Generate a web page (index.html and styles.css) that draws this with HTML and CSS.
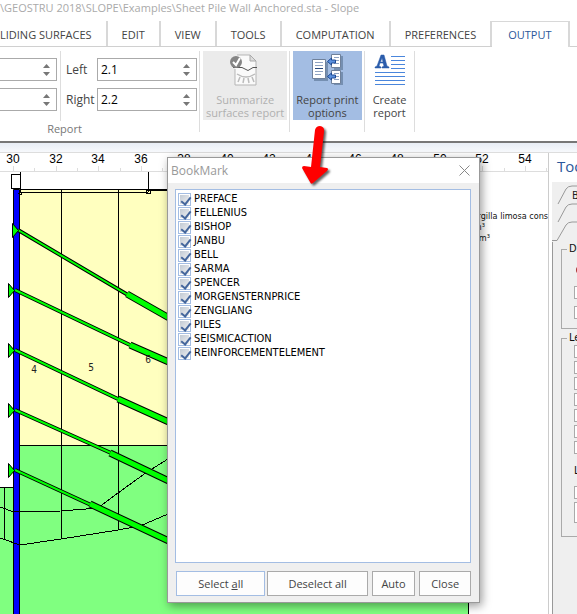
FILE: index.html
```html
<!DOCTYPE html>
<html lang="en">
<head>
<meta charset="utf-8">
<title>Slope</title>
<link rel="stylesheet" href="styles.css">
</head>
<body>
<header class="title">\GEOSTRU 2018\SLOPE\Examples\Sheet Pile Wall Anchored.sta - Slope</header>
<nav class="tabs">
  <a class="tab first" href="#">LIDING SURFACES</a>
  <a class="tab" href="#">EDIT</a>
  <a class="tab" href="#">VIEW</a>
  <a class="tab" href="#">TOOLS</a>
  <a class="tab" href="#">COMPUTATION</a>
  <a class="tab" href="#">PREFERENCES</a>
  <a class="tab active" href="#">OUTPUT</a>
</nav>
<section class="ribbon">
  <div class="group">
    <div class="fields">
      <div class="spins cut">
        <div class="spin"><input type="text" aria-label="Top margin"><svg width="7" height="12"><path d="M0 4 3.500 0 7 4zM0 8 3.500 12 7 8z"/></svg></div>
        <div class="spin"><input type="text" aria-label="Bottom margin"><svg width="7" height="12"><path d="M0 4 3.500 0 7 4zM0 8 3.500 12 7 8z"/></svg></div>
      </div>
      <div class="spins named">
        <label for="left">Left</label>
        <div class="spin"><input id="left" type="text" value="2.1"><svg width="7" height="12"><path d="M0 4 3.500 0 7 4zM0 8 3.500 12 7 8z"/></svg></div>
        <label for="right">Right</label>
        <div class="spin"><input id="right" type="text" value="2.2"><svg width="7" height="12"><path d="M0 4 3.500 0 7 4zM0 8 3.500 12 7 8z"/></svg></div>
      </div>
    </div>
    <div class="caption">Report</div>
  </div>
  <div class="cell">
    <button class="big disabled" disabled>
      <svg width="32" height="32" viewBox="0 0 32 32">
        <path d="M8 1h13l6 6v24H6V15" fill="#fafafa" stroke="#b5b5b5"/>
        <path d="M21 1v6h6z" fill="#ddd" stroke="#aaa"/>
        <path d="M4 13.500h9l6 3 5-3h4" fill="none" stroke="#555"/>
        <path d="M8 20q9 6 18 0M11 23l-2 5M15 24l-1 5M19 24l1 5M23 23l2 5" fill="none" stroke="#bbb" stroke-width="1.500"/>
        <circle cx="7" cy="8" r="6" fill="#858585"/>
        <path d="M4 8l3 3 4-7" fill="none" stroke="#fff" stroke-width="2"/>
      </svg>
      <span>Summarize<br>surfaces report</span>
    </button>
  </div>
  <div class="cell">
    <button class="big chosen">
      <svg width="32" height="32" viewBox="0 0 32 32">
        <path d="M3 8h14v19H3zM23 2h9v14H23zM23 18h9v13H23z" fill="#56708f" opacity=".6"/>
        <path d="M1.500 5.500h13v19h-13zM20.500.500h9v13h-9zM20.500 16.500h9v13h-9z" fill="#fff" stroke="#6f819b"/>
        <path d="M4 8.500h8M4 11.500h8M4 17.500h8M4 20.500h6M23 3.500h5M23 6.500h5M23 9.500h5M23 19.500h5M23 22.500h5M23 25.500h5" stroke="#8fa3c2" fill="none"/>
        <path d="M4 14.500h8" stroke="#28487c"/>
        <path d="M16.500 7.500l4-3.500v2h4v3h-4v2zM16.500 22.500l4-3.500v2h4v3h-4v2z" fill="#5a90de" stroke="#1e4a94"/>
      </svg>
      <span>Report print<br>options</span>
    </button>
  </div>
  <div class="cell">
    <button class="big">
      <svg width="32" height="32" viewBox="0 0 32 32">
        <path d="M17 2.500h14M17 6.500h14M17 10.500h14M17 14.500h14M1 18.500h30M1 22.500h30M1 26.500h30M1 30.500h30" stroke="#4a86dc" fill="none"/>
        <path d="M1 14v-1l2-1L7 1h3l3 11 2 1v1H8v-1l2-1-1-3H6l-1 3 2 1v1zM6.500 8h2.500L8 4z" fill="#2b5cab" stroke="#2b5cab" stroke-width=".5" fill-rule="evenodd"/>
      </svg>
      <span>Create<br>report</span>
    </button>
  </div>
</section>
<div class="strip"></div>
<main class="work">
  <div class="canvas">
    <svg class="drawing" width="548" height="461" viewBox="0 153 548 461">
      <g class="ruler">
        <path class="axis" d="M0 171.500h548M13.500 166v5M34.500 168v3M56.500 166v5M77.500 168v3M98.500 166v5M120.500 168v3M141.500 166v5M162.500 168v3M482.500 166v5M504.500 168v3M525.500 166v5M546.500 168v3"/>
        <text x="13" y="163">30</text><text x="56" y="163">32</text><text x="98" y="163">34</text><text x="141" y="163">36</text>
        <text x="184" y="163">38</text><text x="227" y="163">40</text><text x="269" y="163">42</text><text x="312" y="163">44</text>
        <text x="355" y="163">46</text><text x="397" y="163">48</text><text x="440" y="163">50</text><text x="482" y="163">52</text><text x="525" y="163">54</text>
      </g>
      <path fill="#ffffbf" d="M20 189h448v256H20z"/>
      <path fill="#80ff80" d="M20 445h448v169H0V487h20z"/>
      <path class="ink" d="M20 189.500h148M20 192.500h128M148.500 172v20M20.500 172v20M20 445.500h148M468.500 445v169M0 487.500h14M4.500 488v52M61.500 189v350M118.500 189v341"/>
      <path class="ink" d="M149 190h20" stroke-width="2"/>
      <rect class="ink" x="146.500" y="190.500" width="4" height="3"/>
      <path fill="#00f" stroke="#000" d="M13.500 189.500h6v430h-6z"/>
      <rect x="11.500" y="174.500" width="9" height="14" fill="#fff" stroke="#000"/>
      <circle class="ink" cx="20.500" cy="193.500" r="1.500"/>
      <path class="ink" d="M0 507l14 5 47-1 37-3 20-15 29-21 21-13M0 538l20 7 41-6 57-9 22-4 28-12"/>
      <path class="edge" d="M18 230l110 65M15 290l115 55M15 350l103 49M15 410l96 43M15 470l76 35"/>
      <path class="rod" d="M18 230l110 65M15 290l115 55M15 350l103 49M15 410l96 43M15 470l76 35"/>
      <path class="edge wide" d="M127 294l44 25M130 345l41 18M118 399l53 24M110 453l61 29M90 504l81 38"/>
      <path class="rod wide" d="M127 294l44 25M130 345l41 18M118 399l53 24M110 453l61 29M90 504l81 38"/>
      <path fill="#0f0" stroke="#000" d="M12.500 223.500v14l6-7zM8.500 283.500v14l6-7zM8.500 343.500v14l6-7zM8.500 403.500v14l6-7zM8.500 463.500v14l6-7z"/>
      <g class="slices"><text x="34" y="373">4</text><text x="91" y="371">5</text><text x="148" y="363">6</text></g>
      <g class="soil"><text x="548" y="219">argilla limosa cons</text><text x="485" y="230">m³</text><text x="490" y="241">m³</text></g>
    </svg>
  </div>
  <aside class="side">
    <h2>Too</h2>
    <svg class="sidetabs" width="40" height="60" viewBox="0 0 40 60">
      <path d="M6 22L14 7q2-3 6-3h20M6 40l8-15q2-3 6-3h20M0 58.500h5L14 43q2-3 6-3h20" fill="none" stroke="#999"/>
      <text x="20" y="17">B</text>
    </svg>
    <div class="page">
      <fieldset class="box display"><legend>Di</legend><i class="dot"></i><i class="tick"></i><i class="tick"></i></fieldset>
      <fieldset class="box legend"><legend>Le</legend>
        <i class="tick"></i><i class="tick"></i><i class="tick"></i><i class="tick"></i><i class="tick"></i><i class="tick"></i><i class="tick"></i>
        <p>L</p><i class="tick"></i><i class="tick tall"></i>
      </fieldset>
    </div>
  </aside>
</main>

<section class="dialog" role="dialog" aria-labelledby="dlg">
  <div class="bar"><h1 id="dlg">BookMark</h1><button class="x" aria-label="Close dialog"><svg width="11" height="11"><path d="M.500.500l10 10M10.500.500l-10 10" stroke="#888" fill="none"/></svg></button></div>
  <div class="list">
    <label><input type="checkbox" checked>PREFACE</label>
    <label><input type="checkbox" checked>FELLENIUS</label>
    <label><input type="checkbox" checked>BISHOP</label>
    <label><input type="checkbox" checked>JANBU</label>
    <label><input type="checkbox" checked>BELL</label>
    <label><input type="checkbox" checked>SARMA</label>
    <label><input type="checkbox" checked>SPENCER</label>
    <label><input type="checkbox" checked>MORGENSTERNPRICE</label>
    <label><input type="checkbox" checked>ZENGLIANG</label>
    <label><input type="checkbox" checked>PILES</label>
    <label><input type="checkbox" checked>SEISMICACTION</label>
    <label><input type="checkbox" checked>REINFORCEMENTELEMENT</label>
  </div>
  <div class="actions">
    <button class="focus">Select <u>a</u>ll</button><button class="mid">Deselect all</button><button class="auto">Auto</button><button class="close">Close</button>
  </div>
</section>
<svg class="arrow" width="34" height="68" viewBox="0 0 34 68">
  <path d="M14 4q1-4 5-4 5 1 4 6l-4 35 7 1q2 1 0 3L12 57Q10 59 9 56L1 42q0-2 2-2l7 1z" fill="#f00"/>
</svg>
</body>
</html>
```
FILE: styles.css
```css
* { box-sizing: border-box; }
body {
  margin: 0;
  min-height: 100vh;
  display: flex;
  flex-direction: column;
  position: relative;
  overflow: hidden;
  background: #fff;
  color: #444;
  font: 12px/16px "Open Sans", "Noto Sans", sans-serif;
}
button, input { font: inherit; color: inherit; }
h1, h2, p { margin: 0; font-weight: normal; }

.title { height: 21px; white-space: nowrap; color: #aaa; font-size: 11px; }

.tabs { display: flex; height: 26px; border-bottom: 1px solid #d0d0d0; white-space: nowrap; }
.tab {
  padding: 0 14px;
  border-right: 2px solid #d8d8d8;
  height: 25px;
  line-height: 27px;
  font-size: 11px;
  color: #444;
  text-decoration: none;
}
.tab.first { padding-left: 0; }
.tab.active {
  height: 26px;
  padding: 0 16px;
  border-top: 1px solid #d8d8d8;
  background: #fff;
  color: #2b579a;
  line-height: 25px;
}

.ribbon { display: flex; height: 94px; padding-top: 4px; }
.group { width: 200px; border-right: 1px solid #ddd; height: 81px; }
.fields { display: flex; height: 70px; }
.spins { padding-top: 7px; }
.spins.cut { width: 61px; padding-right: 3px; border-right: 1px solid #ddd; display: grid; grid-template-columns: minmax(0, 1fr); gap: 7px; align-content: start; }
.spins.named { flex: 1; display: grid; grid-template-columns: 31px minmax(0, 1fr); gap: 7px 0; align-content: start; align-items: center; padding-left: 5px; padding-right: 2px; }
.spin { display: flex; align-items: center; height: 23px; border: 1px solid #aaa; padding-right: 6px; background: #fff; }
.cut .spin { border-left: 0; }
.spin input { flex: 1; min-width: 0; width: 100%; border: 0; padding: 0 3px; outline: 0; background: none; color: #000; }
.spin svg { fill: #777; flex: none; }
.caption { text-align: center; padding-right: 70px; font-size: 11px; color: #777; }

.cell { height: 81px; border-right: 1px solid #ddd; padding: 0 2px 0 3px; }
.big {
  display: flex;
  flex-direction: column;
  align-items: center;
  gap: 7px;
  height: 69px;
  min-width: 44px;
  border: 0;
  padding: 3px;
  background: none;
  line-height: 13px;
  font-size: 11px;
  white-space: nowrap;
}
.big svg { flex: none; }
.disabled { background: #ebebeb; color: #b0b0b0; }
.chosen { background: #a3bde3; }

.strip { height: 12px; border-top: 2px solid #777; background: linear-gradient(#e8edf5, #f7f9fc); border-bottom: 1px solid #ddd; }
.work { flex: 1; display: flex; }
.canvas { flex: 1; min-width: 0; overflow: hidden; border-right: 1px solid #ccc; background: #fff; }
.drawing { display: block; }
.ruler text { font: 12px "Liberation Sans", sans-serif; text-anchor: middle; fill: #000; }
.axis { stroke: #ddd; fill: none; }
.ink { fill: none; stroke: #000; shape-rendering: crispEdges; }
.edge { stroke: #000; stroke-width: 4; fill: none; }
.rod { stroke: #0f0; stroke-width: 2; fill: none; }
.edge.wide { stroke-width: 7; }
.rod.wide { stroke-width: 5; }
.slices text { font: 10px "DejaVu Sans Condensed", "DejaVu Sans", sans-serif; text-anchor: middle; fill: #222; }
.soil text { font: 9px "DejaVu Sans Condensed", "DejaVu Sans", sans-serif; text-anchor: end; fill: #111; }

.side { width: 28px; flex: none; overflow: hidden; padding-left: 3px; background: #fff; }
.side h2 { height: 29px; padding-left: 5px; font-size: 15px; line-height: 26px; color: #2b579a; }
.sidetabs { display: block; background: #efefef; }
.sidetabs text { font: 11px "DejaVu Sans Condensed", "DejaVu Sans", sans-serif; fill: #222; }
.page { width: 120px; height: 100%; padding: 0 0 0 8px; border-left: 1px solid #999; background: #efefef; }
.box { margin: 0; padding: 0 0 0 12px; border: 1px solid #aaa; font: 11px/14px "DejaVu Sans Condensed", "DejaVu Sans", sans-serif; color: #111; }
.box legend { padding: 0 2px; margin-left: -7px; }
.display { height: 87px; margin-bottom: 2px; }
.legend { height: 206px; }
.tick { display: block; width: 13px; height: 13px; margin-bottom: 3px; border: 1px solid #aaa; background: #fff; }
.display .tick { margin-bottom: 7px; }
.tall { height: 21px; width: 80px; }
.dot { display: block; width: 8px; height: 8px; margin: 10px 0 12px 2px; border-radius: 4px; background: #a33; }
.box p { margin: 10px 0 8px; }

.dialog {
  position: absolute;
  left: 167px;
  top: 157px;
  width: 313px;
  height: 446px;
  display: flex;
  flex-direction: column;
  border: 1px solid #999;
  background: #efefef;
  box-shadow: 2px 3px 9px rgba(0, 0, 0, .4);
}
.bar { display: flex; justify-content: space-between; align-items: center; height: 25px; flex: none; padding: 0 9px 0 3px; background: #fff; }
.bar h1 { font-size: 12px; color: #999; }
.x { display: flex; border: 0; padding: 0; background: none; }
.list { flex: 1; margin: 6px 8px 8px 7px; padding: 2px; border: 1px solid #a3bde3; background: #fff; }
.list label { display: flex; align-items: center; gap: 3px; height: 14px; color: #000; font: 11px/14px "DejaVu Sans Condensed", "DejaVu Sans", sans-serif; }
.list input {
  appearance: none;
  width: 13px;
  height: 13px;
  margin: 0;
  border: 1px solid #a3bde3;
  box-shadow: inset 0 0 0 1px #fff;
  background: linear-gradient(135deg, #bcc5d0, #f5f5f5);
  position: relative;
}
.list input:checked::after {
  content: "";
  position: absolute;
  left: 4px;
  top: 1px;
  width: 4px;
  height: 8px;
  border: solid #44669c;
  border-width: 0 2px 2px 0;
  transform: rotate(38deg);
}
.actions { display: flex; height: 25px; margin: 0 8px 6px; flex: none; }
.actions button { border: 1px solid #aaa; padding: 0; background: #fdfdfd; font-size: 11px; flex: 90; margin-right: 2px; }
.actions .focus { border-color: #a3bde3; }
.actions .mid { flex: 101; margin-right: 4px; }
.actions .auto { flex: 43; margin-right: 4px; }
.actions .close { flex: 51; margin-right: 0; }

.arrow { position: absolute; left: 301px; top: 126px; filter: drop-shadow(2px 2px 1px rgba(0, 0, 0, .6)); }
```
